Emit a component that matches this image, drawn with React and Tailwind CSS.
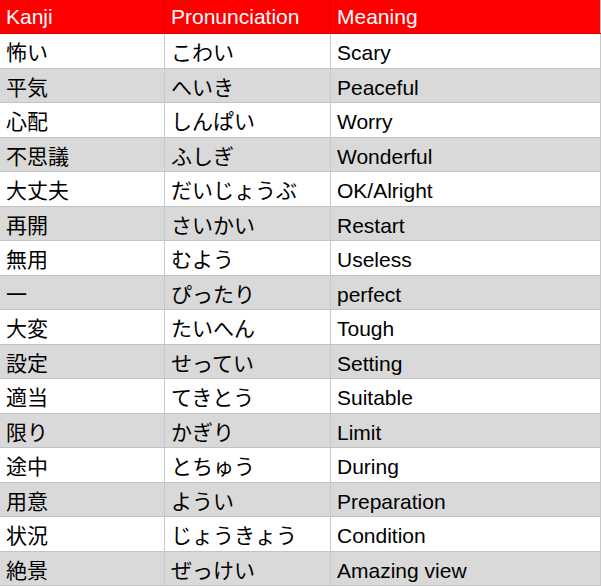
const rows = [
  ["怖い", "こわい", "Scary"],
  ["平気", "へいき", "Peaceful"],
  ["心配", "しんぱい", "Worry"],
  ["不思議", "ふしぎ", "Wonderful"],
  ["大丈夫", "だいじょうぶ", "OK/Alright"],
  ["再開", "さいかい", "Restart"],
  ["無用", "むよう", "Useless"],
  ["一", "ぴったり", "perfect"],
  ["大変", "たいへん", "Tough"],
  ["設定", "せってい", "Setting"],
  ["適当", "てきとう", "Suitable"],
  ["限り", "かぎり", "Limit"],
  ["途中", "とちゅう", "During"],
  ["用意", "ようい", "Preparation"],
  ["状況", "じょうきょう", "Condition"],
  ["絶景", "ぜっけい", "Amazing view"],
];

export default function App() {
  return (
    <div
      className="w-[601px] h-[586px] bg-white overflow-hidden text-[21px] text-black"
      style={{ fontFamily: '"Liberation Sans", Arial, "Noto Sans CJK JP", sans-serif' }}
    >
      <div className="grid grid-cols-[165px_166px_270px] h-[34px] bg-[#ff0000] border-b border-[#d40000] text-white">
        <div className="flex items-center pl-[6px] border-r border-[#e00000]">Kanji</div>
        <div className="flex items-center pl-[6px] border-r border-[#e00000]">Pronunciation</div>
        <div className="flex items-center pl-[6px] border-r border-[#c0c0c0]">Meaning</div>
      </div>
      {rows.map((r, i) => (
        <div
          key={i}
          className={`grid grid-cols-[165px_166px_270px] h-[34.5px] border-b-[1.5px] border-[#c3c3c3] ${
            i % 2 === 1 ? "bg-[#d9d9d9]" : "bg-white"
          }`}
        >
          <div className="flex items-center pl-[6px] pt-[3px] border-r-[1.5px] border-[#c8c8c8]">{r[0]}</div>
          <div className="flex items-center pl-[6px] pt-[3px] border-r-[1.5px] border-[#c8c8c8]">{r[1]}</div>
          <div className="flex items-center pl-[6px] pt-[3px] border-r-[1.5px] border-[#c8c8c8]">{r[2]}</div>
        </div>
      ))}
    </div>
  );
}
